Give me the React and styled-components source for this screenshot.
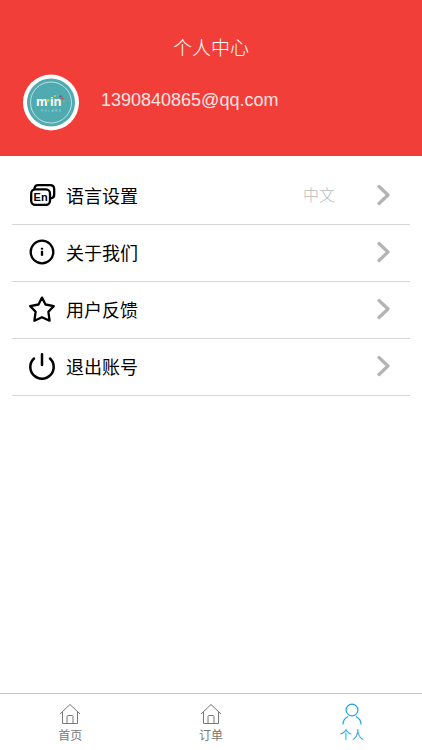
import React from 'react'
import styled, { createGlobalStyle } from 'styled-components'

const GlobalStyle = createGlobalStyle`
  * {
    box-sizing: border-box;
  }
  body {
    margin: 0;
    background: #fff;
    font-family: "Liberation Sans", "Noto Sans CJK SC", sans-serif;
  }
`;

const Page = styled.div`
  min-height: 100vh;
  display: flex;
  flex-direction: column;
`;

const Header = styled.header`
  padding: 34px 23px 25px;
  background: #f23e39;
  color: #fff;
`;

const Title = styled.h1`
  margin: 0 0 10px;
  font-size: 19px;
  line-height: 30px;
  font-weight: 300;
  text-align: center;
`;

const Profile = styled.div`
  display: flex;
  align-items: flex-start;
  gap: 22px;
`;

const Avatar = styled.svg`
  display: block;
  width: 56px;
  height: 57px;
  flex: none;
`;

const Email = styled.p`
  margin: 0;
  padding-top: 14px;
  font-size: 18px;
  line-height: 24px;
  font-weight: 300;
  color: #fde4e3;
`;

const Main = styled.main`
  flex: 1;
  padding: 12px 12px 0;
`;

const List = styled.ul`
  margin: 0;
  padding: 0;
  list-style: none;
`;

const Item = styled.li`
  border-bottom: 1px solid #d6d6d6;
`;

const RowButton = styled.button`
  width: 100%;
  height: 56px;
  display: flex;
  align-items: center;
  padding: 0 20px 2px 16px;
  border: 0;
  background: none;
  font-family: inherit;
  text-align: left;
  cursor: pointer;
`;

const RowIcon = styled.svg`
  width: 28px;
  height: 28px;
  flex: none;
  fill: none;
  stroke: #000;
  stroke-width: 2.5;
  stroke-linecap: round;
  stroke-linejoin: round;
`;

const Label = styled.span`
  flex: 1;
  margin-left: 10px;
  padding-top: 4px;
  font-size: 18px;
  line-height: 26px;
  color: #000;
`;

const Value = styled.span`
  margin-right: 42px;
  padding-top: 2px;
  font-size: 16px;
  line-height: 24px;
  font-weight: 300;
  color: #bbb;
`;

const Chevron = styled.svg`
  width: 13px;
  height: 22px;
  flex: none;
  fill: none;
  stroke: #b4b4b4;
  stroke-width: 3.2;
  stroke-linecap: round;
  stroke-linejoin: round;
`;

const TabBar = styled.nav`
  display: flex;
  height: 57px;
  border-top: 1px solid #c4c4c4;
`;

const Tab = styled.a`
  flex: 1;
  display: flex;
  flex-direction: column;
  align-items: center;
  padding-top: 8px;
  font-size: 12px;
  line-height: 20px;
  text-decoration: none;
  color: ${({ $active }) => ($active ? '#1ba4e0' : '#777')};
`;

const TabIcon = styled.svg`
  width: 24px;
  height: 24px;
  fill: none;
  stroke: currentColor;
  stroke-width: 1;
`;

const LanguageIcon = () => (
  <RowIcon viewBox="0 0 28 28" aria-hidden="true">
    <rect x="3.2" y="8.4" width="18.8" height="15.4" rx="4" strokeWidth="2.3" />
    <path d="M6.4 7.500C6.8 5.2 8 4.2 10 4.200h12c2.800 0 4.200 1.400 4.200 4v5.400c0 2-.9 3.200-2.600 3.600" strokeWidth="2.300" />
    <text x="12.600" y="20" textAnchor="middle" fontSize="11" fontWeight="bold" fill="#000" stroke="none">En</text>
  </RowIcon>
);

const InfoIcon = () => (
  <RowIcon viewBox="0 0 28 28" aria-hidden="true">
    <circle cx="14" cy="14" r="11.3" strokeWidth="2.3" />
    <path d="M14 12.800v5" strokeWidth="2.3" strokeLinecap="butt" />
    <path d="M14 9.800v1.800" strokeWidth="2.3" strokeLinecap="butt" />
  </RowIcon>
);

const StarIcon = () => (
  <RowIcon viewBox="0 0 28 28" aria-hidden="true">
    <path d="M14 2.600l3.500 6.900 8.300 1.600-5.400 5.700 1.200 8.900-7.600-3.500-7.600 3.500 1.200-8.900-5.400-5.700 8.300-1.600z" strokeWidth="2.3" />
  </RowIcon>
);

const PowerIcon = () => (
  <RowIcon viewBox="0 0 28 28" aria-hidden="true">
    <path d="M14 2.200v10.800M6 6.500a11.700 11.700 0 1 0 16 0" />
  </RowIcon>
);

const HomeIcon = () => (
  <TabIcon viewBox="0 0 24 24" aria-hidden="true">
    <path d="M2 12L12 2.500 22 12M4.500 10v11.500h15V10M9 21.500v-7q0-1 1-1h4q1 0 1 1v7" />
  </TabIcon>
);

const UserIcon = () => (
  <TabIcon viewBox="0 0 24 24" aria-hidden="true">
    <circle cx="12" cy="8" r="5.9" strokeWidth="1.2" />
    <path d="M3 22.500c0-4 2-6.600 5.200-8M15.800 14.500c3.200 1.400 5.200 4 5.200 8" strokeWidth="1.2" />
  </TabIcon>
);

const rows = [
  { label: '语言设置', value: '中文', Icon: LanguageIcon },
  { label: '关于我们', Icon: InfoIcon },
  { label: '用户反馈', Icon: StarIcon },
  { label: '退出账号', Icon: PowerIcon },
];

const tabs = [
  { label: '首页', href: '#home', Icon: HomeIcon },
  { label: '订单', href: '#orders', Icon: HomeIcon },
  { label: '个人', href: '#me', Icon: UserIcon, active: true },
];

function BrandAvatar() {
  return (
    <Avatar viewBox="0 0 56 57" role="img" aria-label="min">
      <circle cx="28" cy="28.5" r="28" fill="#fff" />
      <circle cx="28" cy="28.5" r="24" fill="#4fabb0" />
      <circle cx="28" cy="28.5" r="20.5" fill="none" stroke="#d5eeee" strokeWidth=".8" />
      {/* 로고 글자 */}
      <text x="13" y="32" fontSize="13" fontWeight="bold" fill="#fff">m</text>
      <text x="27" y="32" fontSize="13" fontWeight="bold" fill="#fff">in</text>
      <text x="18" y="37.5" fontSize="3" letterSpacing="1.5" fill="#a5d6d8">POLARD</text>
      <circle cx="25" cy="26.5" r="1.7" fill="#b9cf3c" />
      <circle cx="32" cy="22" r="1" fill="#f0c33c" />
      <circle cx="35" cy="21.5" r=".8" fill="#8bc34a" />
      <circle cx="37.5" cy="22.5" r="1.2" fill="#8e4a8e" />
      <circle cx="39.5" cy="24.5" r="1.2" fill="#e0503c" />
      <circle cx="41" cy="27" r=".8" fill="#e8a13c" />
    </Avatar>
  );
}

function App() {
  return (
    <>
      <GlobalStyle />
      <Page lang="zh-CN">
        <Header>
          <Title>个人中心</Title>
          <Profile>
            <BrandAvatar />
            <Email>1390840865@qq.com</Email>
          </Profile>
        </Header>
        <Main>
          <List>
            {rows.map(({ label, value, Icon }) => (
              <Item key={label}>
                <RowButton type="button">
                  <Icon />
                  <Label>{label}</Label>
                  {value && <Value>{value}</Value>}
                  <Chevron viewBox="0 0 13 22" aria-hidden="true">
                    <path d="M2 2.500L11 11l-9 8.500" />
                  </Chevron>
                </RowButton>
              </Item>
            ))}
          </List>
        </Main>
        <TabBar>
          {tabs.map(({ label, href, Icon, active }) => (
            <Tab key={label} href={href} $active={active} aria-current={active ? 'page' : undefined}>
              <Icon />
              {label}
            </Tab>
          ))}
        </TabBar>
      </Page>
    </>
  );
}

export default App
